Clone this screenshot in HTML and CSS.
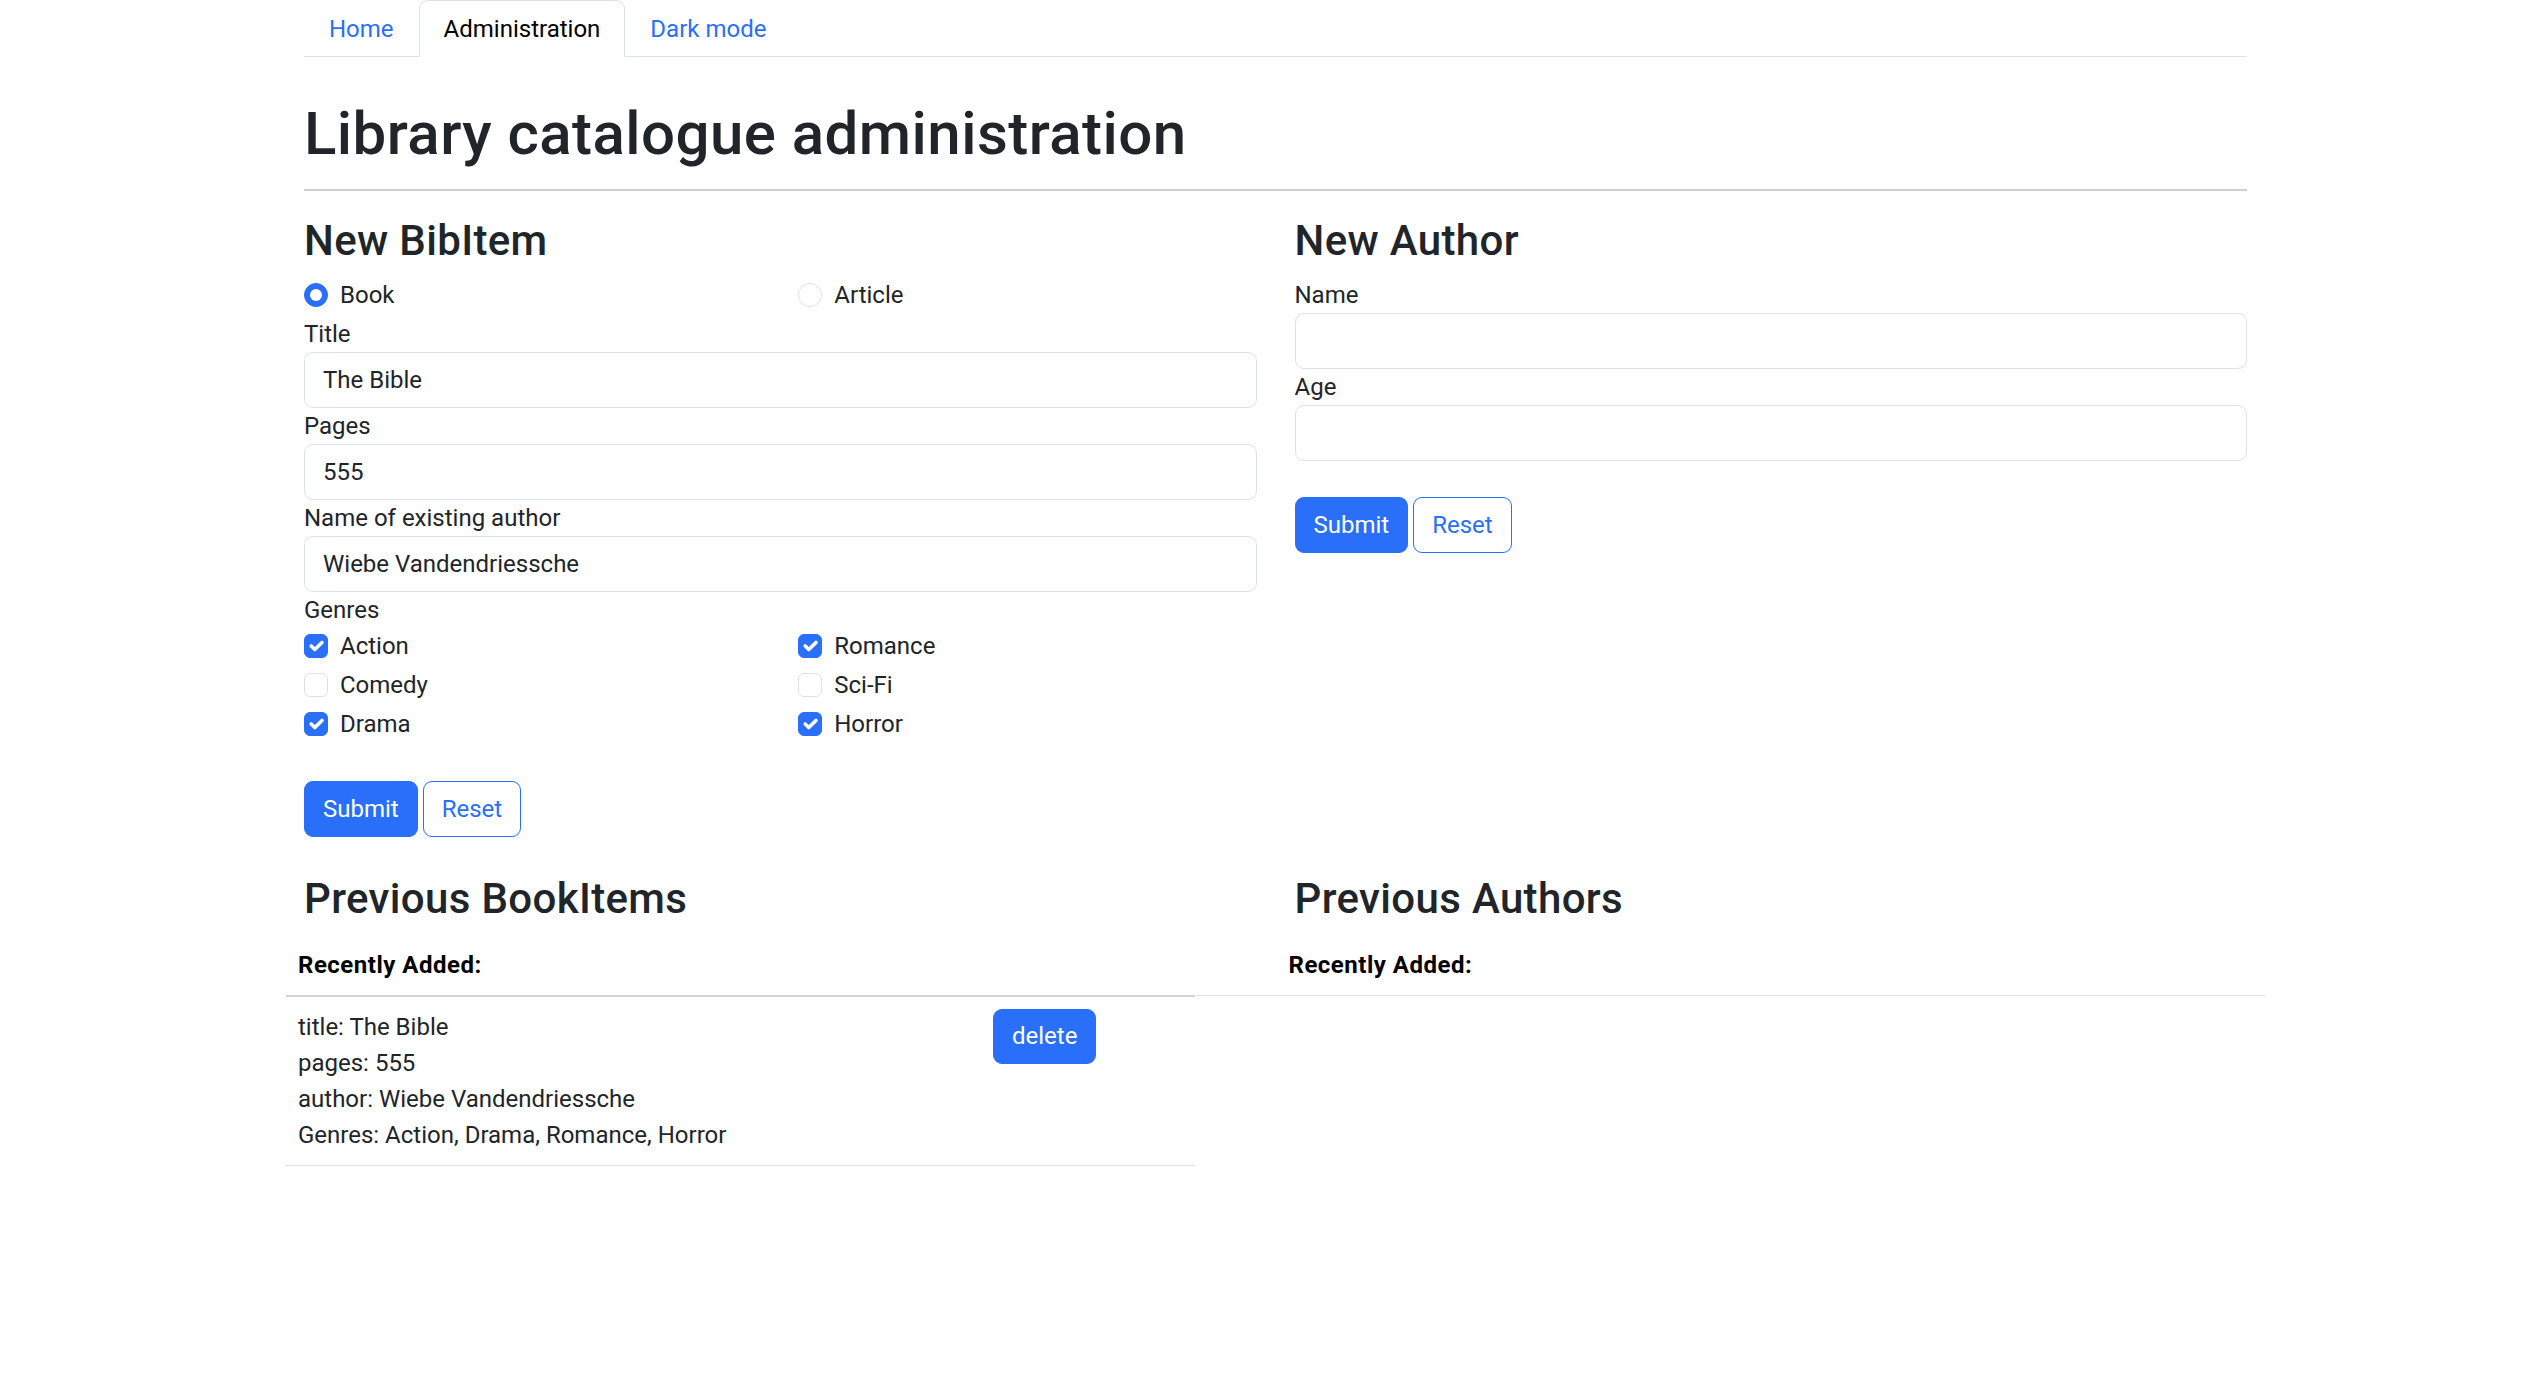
FILE: index.html
```html
<!DOCTYPE html>
<html lang="en">
<head>
<meta charset="utf-8">
<title>Library catalogue administration</title>
<link rel="stylesheet" href="styles.css">
</head>
<body>
<nav class="wrap">
  <ul class="nav-tabs">
    <li><a class="nav-link" href="#">Home</a></li>
    <li><a class="nav-link active" href="#">Administration</a></li>
    <li><a class="nav-link" href="#">Dark mode</a></li>
  </ul>
</nav>
<main class="wrap">
  <h1 class="page-title">Library catalogue administration</h1>
  <hr class="rule">

  <div class="row top-row">
    <section class="col">
      <h3 class="section-title">New BibItem</h3>
      <div class="pair">
        <div class="check">
          <span class="radio on"><span class="dot"></span></span>
          <span class="check-label">Book</span>
        </div>
        <div class="check">
          <span class="radio"></span>
          <span class="check-label">Article</span>
        </div>
      </div>
      <label class="field-label">Title</label>
      <input class="field" type="text" value="The Bible">
      <label class="field-label">Pages</label>
      <input class="field" type="text" value="555">
      <label class="field-label">Name of existing author</label>
      <input class="field" type="text" value="Wiebe Vandendriessche">
      <label class="field-label">Genres</label>
      <div class="pair">
        <div>
          <div class="check">
            <span class="box on"><svg viewBox="0 0 20 20" width="24" height="24"><path d="M6 10l3 3l6-6" fill="none" stroke="#fff" stroke-width="3" stroke-linecap="round" stroke-linejoin="round"/></svg></span>
            <span class="check-label">Action</span>
          </div>
          <div class="check">
            <span class="box"></span>
            <span class="check-label">Comedy</span>
          </div>
          <div class="check">
            <span class="box on"><svg viewBox="0 0 20 20" width="24" height="24"><path d="M6 10l3 3l6-6" fill="none" stroke="#fff" stroke-width="3" stroke-linecap="round" stroke-linejoin="round"/></svg></span>
            <span class="check-label">Drama</span>
          </div>
        </div>
        <div>
          <div class="check">
            <span class="box on"><svg viewBox="0 0 20 20" width="24" height="24"><path d="M6 10l3 3l6-6" fill="none" stroke="#fff" stroke-width="3" stroke-linecap="round" stroke-linejoin="round"/></svg></span>
            <span class="check-label">Romance</span>
          </div>
          <div class="check">
            <span class="box"></span>
            <span class="check-label">Sci-Fi</span>
          </div>
          <div class="check">
            <span class="box on"><svg viewBox="0 0 20 20" width="24" height="24"><path d="M6 10l3 3l6-6" fill="none" stroke="#fff" stroke-width="3" stroke-linecap="round" stroke-linejoin="round"/></svg></span>
            <span class="check-label">Horror</span>
          </div>
        </div>
      </div>
      <div class="actions">
        <button class="btn btn-primary" type="button">Submit</button>
        <button class="btn btn-outline" type="button">Reset</button>
      </div>
    </section>

    <section class="col">
      <h3 class="section-title">New Author</h3>
      <label class="field-label">Name</label>
      <input class="field" type="text" value="">
      <label class="field-label">Age</label>
      <input class="field" type="text" value="">
      <div class="actions">
        <button class="btn btn-primary" type="button">Submit</button>
        <button class="btn btn-outline" type="button">Reset</button>
      </div>
    </section>
  </div>

  <div class="row bottom-row">
    <section class="col">
      <h3 class="section-title">Previous BookItems</h3>
      <table class="list list-items">
        <thead>
          <tr><th colspan="2">Recently Added:</th></tr>
        </thead>
        <tbody>
          <tr>
            <td class="item-info">
              <div>title: The Bible</div>
              <div>pages: 555</div>
              <div>author: Wiebe Vandendriessche</div>
              <div>Genres: Action, Drama, Romance, Horror</div>
            </td>
            <td class="item-action"><button class="btn btn-primary btn-delete" type="button">delete</button></td>
          </tr>
        </tbody>
      </table>
    </section>
    <section class="col">
      <h3 class="section-title">Previous Authors</h3>
      <table class="list list-authors">
        <thead>
          <tr><th>Recently Added:</th></tr>
        </thead>
      </table>
    </section>
  </div>
</main>
</body>
</html>
```
FILE: styles.css
```css
html, body {
  margin: 0;
  padding: 0;
  background: #fff;
}

body {
  font-family: Roboto, "Liberation Sans", sans-serif;
  font-size: 24px;
  line-height: 36px;
  color: #212529;
}

.wrap {
  width: 1943px;
  margin-left: 304px;
}

/* ---------- tabs ---------- */
.nav-tabs {
  display: flex;
  list-style: none;
  margin: 0;
  padding: 0;
  border-bottom: 1px solid #dee2e6;
}

.nav-link {
  display: block;
  padding: 10px 24px 9px;
  line-height: 36px;
  border: 1px solid transparent;
  border-top-left-radius: 9px;
  border-top-right-radius: 9px;
  margin-bottom: -1px;
  color: #2a6ffa;
  text-decoration: none;
}

.nav-link.active {
  color: #000;
  background: #fff;
  border-color: #dee2e6 #dee2e6 #fff;
}

/* ---------- headings ---------- */
.page-title {
  margin: 41px 0 0;
  font-size: 60px;
  line-height: 72px;
  font-weight: 500;
  letter-spacing: 0.45px;
}

.rule {
  margin: 19px 0 25px;
  border: 0;
  border-top: 2px solid #cfd0d1;
  height: 0;
}

.section-title {
  margin: 0 0 11px;
  font-size: 42px;
  line-height: 50px;
  font-weight: 500;
  letter-spacing: 0.35px;
}

/* ---------- grid ---------- */
.row {
  display: grid;
  grid-template-columns: 1fr 1fr;
  column-gap: 38px;
}

.col {
  min-width: 0;
}

.bottom-row {
  margin-top: 37px;
}

.pair {
  display: grid;
  grid-template-columns: 1fr 1fr;
  column-gap: 36px;
}

/* ---------- form checks ---------- */
.check {
  display: flex;
  align-items: flex-start;
  height: 36px;
  margin-bottom: 3px;
}

.radio,
.box {
  box-sizing: border-box;
  flex: 0 0 24px;
  width: 24px;
  height: 24px;
  margin-top: 6px;
  margin-right: 12px;
  border: 1px solid #dee2e6;
  background: #fff;
  display: flex;
  align-items: center;
  justify-content: center;
}

.radio {
  border-radius: 50%;
}

.radio.on {
  background: #2a6ffa;
  border-color: #2a6ffa;
}

.radio .dot {
  width: 12px;
  height: 12px;
  border-radius: 50%;
  background: #fff;
}

.box {
  border-radius: 6px;
}

.box.on {
  background: #2a6ffa;
  border-color: #2a6ffa;
}

.box svg {
  display: block;
  flex: 0 0 auto;
}

/* ---------- fields ---------- */
.field-label {
  display: block;
  line-height: 36px;
}

.field {
  display: block;
  box-sizing: border-box;
  width: 100%;
  height: 56px;
  margin: 0;
  padding: 0 18px;
  border: 1px solid #dee2e6;
  border-radius: 9px;
  background: #fff;
  font-family: Roboto, "Liberation Sans", sans-serif;
  font-size: 24px;
  color: #212529;
  outline: none;
}

/* ---------- buttons ---------- */
.actions {
  display: flex;
  gap: 5px;
  margin-top: 36px;
}

.btn {
  box-sizing: border-box;
  height: 56px;
  padding: 0 18px;
  border: 1px solid #2a6ffa;
  border-radius: 9px;
  font-family: Roboto, "Liberation Sans", sans-serif;
  font-size: 24px;
  line-height: 54px;
  cursor: pointer;
}

.btn-primary {
  background: #2a6ffa;
  color: #fff;
}

.btn-outline {
  background: #fff;
  color: #2a6ffa;
}

.btn-delete {
  height: 55px;
  line-height: 53px;
}

/* ---------- tables ---------- */
.list {
  border-collapse: collapse;
  margin-top: 0;
}

.list th {
  text-align: left;
  font-weight: 700;
  letter-spacing: 0.5px;
  padding: 12px;
  line-height: 36px;
  color: #000;
}

.list-items {
  margin-left: -18px;
  width: 909px;
}

.list-items th {
  border-bottom: 2px solid #d3d4d5;
}

.list-items td {
  vertical-align: top;
  padding: 12px;
  border-bottom: 1px solid #dee2e6;
}

.item-info {
  width: 671px;
}

.item-action {
  padding-top: 13px;
}

.list-authors {
  margin-left: -99px;
  width: calc(100% + 117px);
}

.list-authors th {
  padding-left: 93px;
  border-bottom: 1px solid #dee2e6;
}
```
